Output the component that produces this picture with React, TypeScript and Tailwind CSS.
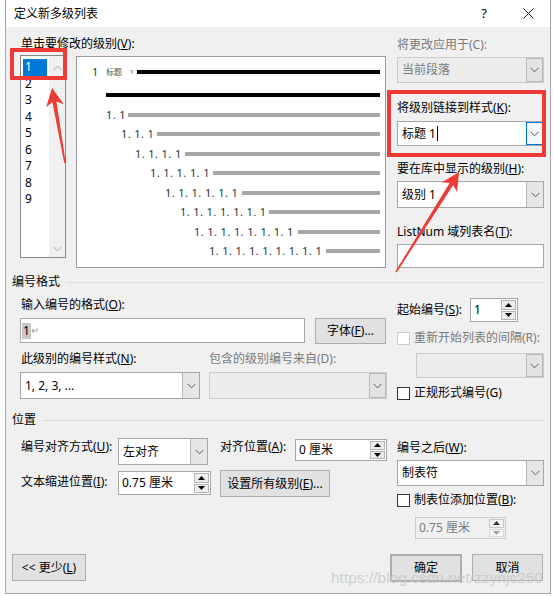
import { ReactNode } from "react"

const levels = [
  { label: "1. 1", pad: "pl-[29px]", w: "w-[18px]" },
  { label: "1. 1. 1", pad: "pl-[44px]", w: "w-[32px]" },
  { label: "1. 1. 1. 1", pad: "pl-[58px]", w: "w-[46px]" },
  { label: "1. 1. 1. 1. 1", pad: "pl-[73px]", w: "w-[59px]" },
  { label: "1. 1. 1. 1. 1. 1", pad: "pl-[88px]", w: "w-[73px]" },
  { label: "1. 1. 1. 1. 1. 1. 1", pad: "pl-[103px]", w: "w-[85px]" },
  { label: "1. 1. 1. 1. 1. 1. 1. 1", pad: "pl-[117px]", w: "w-[100px]" },
  { label: "1. 1. 1. 1. 1. 1. 1. 1. 1", pad: "pl-[132px]", w: "w-[113px]" },
]

function Label({ children, disabled = false, className = "" }: { children: ReactNode; disabled?: boolean; className?: string }) {
  return (
    <div className={`h-4 leading-4 text-[12px] whitespace-nowrap ${disabled ? "text-[#7a7a7a]" : "text-black"} ${className}`}>
      {children}
    </div>
  )
}

function Chevron({ color = "#5a5a5a", up = false }: { color?: string; up?: boolean }) {
  return (
    <svg width="9" height="6" viewBox="0 0 9 6">
      <path d={up ? "M0.5 5.2 L4.5 1.2 L8.5 5.2" : "M0.5 0.8 L4.5 4.8 L8.5 0.8"} fill="none" stroke={color} strokeWidth="1" />
    </svg>
  )
}

function Tri({ up = false, color = "#000" }: { up?: boolean; color?: string }) {
  return (
    <svg width="7" height="4" viewBox="0 0 7 4">
      <polygon points={up ? "0,4 3.5,0 7,4" : "0,0 3.5,4 7,0"} fill={color} />
    </svg>
  )
}

function Combo({ value, className = "", disabled = false, focused = false, caret = false }: { value?: ReactNode; className?: string; disabled?: boolean; focused?: boolean; caret?: boolean }) {
  return (
    <div className={`flex border ${disabled ? "border-[#cccccc] bg-[#ececec] text-[#7a7a7a]" : "border-[#a6a6a6] bg-white text-black"} ${className}`}>
      <div className="flex-1 flex items-center pl-[4px] text-[12px] whitespace-nowrap overflow-hidden">
        {value}
        {caret && <span className="ml-[1px] w-px h-[15px] bg-black" />}
      </div>
      <div
        className={`w-[17px] flex items-center justify-center border ${
          focused ? "border-[#0078d7] bg-[#f3f8fd]" : disabled ? "border-[#b9b9b9] bg-[#e3e3e3]" : "border-y-0 border-r-0 border-l-[#b9b9b9] bg-[#e6e6e6]"
        }`}
      >
        <Chevron />
      </div>
    </div>
  )
}

function Spin({ value, className = "", disabled = false }: { value: ReactNode; className?: string; disabled?: boolean }) {
  return (
    <div className={`flex border ${disabled ? "border-[#cccccc] bg-[#f0f0f0] text-[#7a7a7a]" : "border-[#a6a6a6] bg-white text-black"} ${className}`}>
      <div className="flex-1 flex items-center pl-[3px] text-[12px] whitespace-nowrap">{value}</div>
      <div className="w-[17px] flex flex-col gap-px p-px">
        <div className={`flex-1 flex items-center justify-center border ${disabled ? "border-[#c8c8c8] bg-[#f4f4f4]" : "border-[#b5b5b5] bg-[#ececec]"}`}>
          <Tri up color={disabled ? "#333" : "#000"} />
        </div>
        <div className={`flex-1 flex items-center justify-center border ${disabled ? "border-[#d8d8d8] bg-[#f4f4f4]" : "border-[#b5b5b5] bg-[#ececec]"}`}>
          <Tri color={disabled ? "#a0a0a0" : "#000"} />
        </div>
      </div>
    </div>
  )
}

function Check({ children, disabled = false }: { children: ReactNode; disabled?: boolean }) {
  return (
    <div className="flex items-center gap-[4px] h-4">
      <div className={`w-[13px] h-[13px] border bg-white ${disabled ? "border-[#cccccc]" : "border-[#333333]"}`} />
      <Label disabled={disabled}>{children}</Label>
    </div>
  )
}

function Btn({ children, className = "" }: { children: ReactNode; className?: string }) {
  return (
    <div className={`flex items-center justify-center border border-[#adadad] bg-[#e1e1e1] text-[12px] whitespace-nowrap ${className}`}>
      {children}
    </div>
  )
}

function GroupHead({ title, className = "" }: { title: string; className?: string }) {
  return (
    <div className={`flex items-center gap-[6px] h-4 ${className}`}>
      <Label>{title}</Label>
      <div className="flex-1 border-t border-[#dcdcdc]" />
    </div>
  )
}

export default function App() {
  return (
    <div className="w-[554px] h-[596px] bg-white relative overflow-hidden font-['Noto_Sans','Noto_Sans_CJK_SC',sans-serif] text-black">
      <div className="ml-[5px] w-[546px] h-[594px] border border-t-0 border-[#a3a3a3] flex flex-col">
        {/* title bar */}
        <div className="h-[27px] bg-white flex items-center pl-[8px] shrink-0">
          <span className="text-[12px]">定义新多级列表</span>
          <span className="ml-auto text-[13px] mr-[36px]">?</span>
          <svg width="11" height="11" viewBox="0 0 11 11" className="mr-[16px]">
            <path d="M0.5 0.5 L10.5 10.5 M10.5 0.5 L0.5 10.5" stroke="#222" strokeWidth="1" />
          </svg>
        </div>

        {/* body */}
        <div className="flex-1 bg-[#f0f0f0] px-[6px] flex flex-col">
          {/* levels + preview */}
          <div className="flex items-start pl-[8px] gap-[11px]">
            <div className="w-[366px] pt-[9px]">
              <Label className="pl-px">
                单击要修改的级别(<u>V</u>):
              </Label>
              <div className="flex items-start gap-[10px] mt-[3px]">
                <div className="w-[46px] h-[203px] border border-[#828790] bg-white flex">
                  <div className="flex-1 pt-[3px] pl-[2px] text-[12px]">
                    <div className="h-[16.5px] w-[24px] bg-[#0078d7] text-white pl-[2px] leading-[16.5px]">1</div>
                    {[2, 3, 4, 5, 6, 7, 8, 9].map((n) => (
                      <div key={n} className="h-[16.5px] pl-[2px] leading-[16.5px]">
                        {n}
                      </div>
                    ))}
                  </div>
                  <div className="w-[16px] bg-[#f0f0f0] flex flex-col items-center justify-between pt-[9px] pb-[5px]">
                    <Chevron up color="#a8a8a8" />
                    <Chevron color="#a8a8a8" />
                  </div>
                </div>

                <div className="w-[310px] h-[212px] mt-px border border-[#9a9a9a] bg-white pt-[5px] pr-[5px] text-[#2b3442]">
                  <div className="h-5 flex items-center pl-[15px]">
                    <span className="w-[14px] text-[11px]">1</span>
                    <span className="w-[24px] text-[8px] text-[#555]">标题</span>
                    <span className="w-[7px] text-[6px]">1</span>
                    <div className="flex-1 h-[4px] bg-black" />
                  </div>
                  <div className="h-5 mt-[3px] flex items-center pl-[29px]">
                    <div className="flex-1 h-[4px] bg-black" />
                  </div>
                  {levels.map((l) => (
                    <div key={l.label} className={`h-[19.5px] flex items-center ${l.pad}`}>
                      <span className={`${l.w} mr-[4px] text-[11px] tracking-[0.4px] whitespace-nowrap`}>{l.label}</span>
                      <div className="flex-1 h-[4px] bg-[#a6a6a6]" />
                    </div>
                  ))}
                </div>
              </div>
            </div>

            <div className="w-[147px] pt-[10px]">
              <Label disabled>将更改应用于(C):</Label>
              <Combo disabled value="当前段落" className="mt-[4px] h-[26px]" />
              <Label className="mt-[17px]">
                将级别链接到样式(<u>K</u>):
              </Label>
              <Combo value="标题 1" caret focused className="mt-[5px] h-[25px]" />
              <Label className="mt-[15px]">
                要在库中显示的级别(<u>H</u>):
              </Label>
              <Combo value="级别 1" className="mt-[4px] h-[27px]" />
              <Label className="mt-[16px]">
                ListNum 域列表名(<u>T</u>):
              </Label>
              <div className="mt-[4px] h-[24px] border border-[#a6a6a6] bg-white" />
            </div>
          </div>

          {/* number format */}
          <GroupHead title="编号格式" className="mt-[6px]" />
          <div className="flex items-start pl-[8px] gap-[10px]">
            <div className="w-[367px] pt-[7px]">
              <Label className="pl-px">
                输入编号的格式(<u>O</u>):
              </Label>
              <div className="flex items-start gap-[10px] mt-[5px]">
                <div className="w-[285px] h-[25px] border border-[#a6a6a6] bg-white flex items-center pl-px text-[12px]">
                  <span className="bg-[#c8c8c8] leading-[16px] px-px">1</span>
                  <span className="text-[10px] text-[#9a9a9a]">↵</span>
                </div>
                <Btn className="w-[71px] h-[26px]">
                  字体(<u>F</u>)...
                </Btn>
              </div>
              <div className="flex mt-[7px]">
                <Label className="w-[189px] pl-px">
                  此级别的编号样式(<u>N</u>):
                </Label>
                <Label disabled>包含的级别编号来自(D):</Label>
              </div>
              <div className="flex gap-[9px] mt-[5px]">
                <Combo value="1, 2, 3, ..." className="w-[180px] h-[27px]" />
                <Combo disabled className="w-[178px] h-[27px]" />
              </div>
            </div>

            <div className="w-[147px] pt-[8px]">
              <div className="flex items-center h-[24px]">
                <Label className="w-[73px]">
                  起始编号(<u>S</u>):
                </Label>
                <Spin value="1" className="w-[48px] h-[24px]" />
              </div>
              <div className="mt-[8px]">
                <Check disabled>重新开始列表的间隔(R):</Check>
              </div>
              <Combo disabled className="ml-[19px] mt-[7px] h-[25px]" />
              <div className="mt-[7px]">
                <Check>正规形式编号(G)</Check>
              </div>
            </div>
          </div>

          {/* position */}
          <GroupHead title="位置" className="mt-[11px]" />
          <div className="flex items-start pl-[8px] gap-[10px]">
            <div className="w-[367px] pt-[10px]">
              <div className="flex items-start h-[27px]">
                <Label className="w-[98px] mt-px pl-px">
                  编号对齐方式(<u>U</u>):
                </Label>
                <Combo value="左对齐" className="w-[90px] h-[27px]" />
                <Label className="w-[75px] ml-[12px] mt-px">
                  对齐位置(<u>A</u>):
                </Label>
                <Spin value="0 厘米" className="w-[92px] h-[22px] mt-px" />
              </div>
              <div className="flex items-start h-[27px] mt-[5px]">
                <Label className="w-[98px] mt-[4px] pl-px">
                  文本缩进位置(<u>I</u>):
                </Label>
                <Spin value="0.75 厘米" className="w-[93px] h-[24px] mt-px" />
                <Btn className="w-[110px] h-[27px] ml-[9px]">
                  设置所有级别(<u>E</u>)...
                </Btn>
              </div>
            </div>

            <div className="w-[147px] pt-[12px]">
              <Label>
                编号之后(<u>W</u>):
              </Label>
              <Combo value="制表符" className="mt-[4px] h-[26px]" />
              <div className="mt-[6px]">
                <Check>
                  制表位添加位置(<u>B</u>):
                </Check>
              </div>
              <Spin disabled value="0.75 厘米" className="ml-[18px] mt-[9px] w-[91px] h-[22px]" />
            </div>
          </div>

          {/* buttons */}
          <div className="flex items-start mt-[15px]">
            <Btn className="w-[74px] h-[27px]">
              {"<<"} 更少(<u>L</u>)
            </Btn>
            <Btn className="ml-auto w-[72px] h-[28px] border-2 border-[#0078d7]">确定</Btn>
            <Btn className="ml-[10px] mr-px w-[71px] h-[27px]">取消</Btn>
          </div>
        </div>
      </div>

      {/* annotations */}
      <div className="absolute left-[10px] top-[48px] w-[57px] h-[32px] border-[4px] border-[#ef3b36]" />
      <div className="absolute left-[387px] top-[90px] w-[159px] h-[67px] border-[4px] border-[#ef3b36]" />
      <svg className="absolute inset-0 pointer-events-none" width="554" height="596" viewBox="0 0 554 596">
        <polygon points="52,88 63.9,104.2 56.4,101.5 65.8,162.9 64.2,163.1 52.4,102.1 46.2,107.2" fill="#ef3b36" />
        <polygon points="459,172 457,192 453.2,184.9 396.7,272.4 395.3,271.6 449.8,182.7 441.8,182.4" fill="#ef3b36" />
      </svg>
      <div className="absolute left-[331px] top-[569px] text-[15.5px] leading-[18px] font-['Liberation_Sans',sans-serif] text-[#c4c4c4]/75 whitespace-nowrap pointer-events-none">
        https://blog.csdn.net/zzynjc250
      </div>
    </div>
  )
}
